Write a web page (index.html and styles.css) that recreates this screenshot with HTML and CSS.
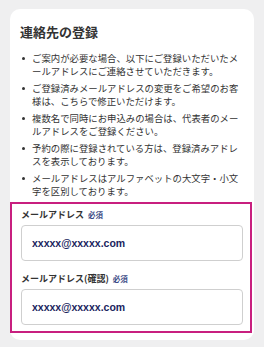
FILE: index.html
```html
<!DOCTYPE html>
<html lang="ja">
<head>
    <meta charset="UTF-8">
    <title>連絡先の登録</title>
    <link rel="stylesheet" href="styles.css">
</head>
<body>
    <div class="card">
        <h2 class="title">連絡先の登録</h2>
        <ul class="notes">
            <li>ご案内が必要な場合、以下にご登録いただいたメールアドレスにご連絡させていただきます。</li>
            <li>ご登録済みメールアドレスの変更をご希望のお客様は、こちらで修正いただけます。</li>
            <li>複数名で同時にお申込みの場合は、代表者のメールアドレスをご登録ください。</li>
            <li>予約の際に登録されている方は、登録済みアドレスを表示しております。</li>
            <li>メールアドレスはアルファベットの大文字・小文字を区別しております。</li>
        </ul>
        <div class="mark">
            <div class="field">
                <div class="label">メールアドレス<span class="req">必須</span></div>
                <input class="input" type="text" value="xxxxx@xxxxx.com">
            </div>
            <div class="field">
                <div class="label">メールアドレス(確認)<span class="req">必須</span></div>
                <input class="input" type="text" value="xxxxx@xxxxx.com">
            </div>
        </div>
    </div>
</body>
</html>
```

FILE: styles.css
```css
*{
    margin: 0;
    padding: 0;
    box-sizing: border-box;
}
body{
    background-color: #efeff0;
    font-family: "Noto Sans CJK JP", "Noto Sans", sans-serif;
    color: #333;
    padding: 9px 10px 0 10px;
}
.card{
    width: 244px;
    background-color: #fff;
    border-radius: 10px;
    padding: 14px 0 7px 0;
}
.title{
    font-size: 13px;
    line-height: 18px;
    font-weight: bold;
    padding-left: 10px;
    color: #333;
}
.notes{
    list-style: none;
    margin-top: 11px;
    padding: 0 8px 0 22px;
}
.notes li{
    position: relative;
    font-size: 9.4px;
    line-height: 13px;
    margin-bottom: 4px;
}
.notes li::before{
    content: "";
    position: absolute;
    left: -10px;
    top: 5px;
    width: 3px;
    height: 3px;
    border-radius: 50%;
    background-color: #333;
}
.mark{
    margin: 2px 2px 0 0;
    border: 2px solid #c81f7f;
    padding: 4px 7px 6px 9px;
}
.field + .field{
    margin-top: 11px;
}
.label{
    font-size: 9px;
    line-height: 14px;
    font-weight: bold;
    color: #333;
    margin-bottom: 3px;
}
.req{
    font-size: 7.5px;
    color: #3b4a86;
    margin-left: 4px;
}
.input{
    display: block;
    width: 222px;
    height: 36px;
    border: 1px solid #cfcfcf;
    border-radius: 4px;
    padding-left: 10px;
    font-family: "Liberation Sans", Arial, sans-serif;
    font-size: 10.5px;
    font-weight: bold;
    color: #1b1f5e;
    background-color: #fff;
    outline: none;
}
```
